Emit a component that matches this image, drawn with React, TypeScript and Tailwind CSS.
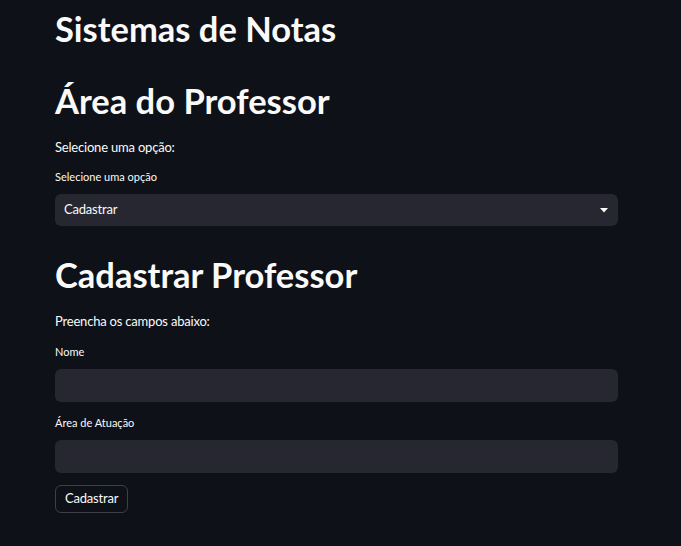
const font = { fontFamily: '"Lato", "Noto Sans", sans-serif' };

function Field({ label }: { label: string }) {
  return (
    <div className="flex flex-col">
      <label className="text-[11px] leading-[16px] text-[#fafafa] mb-[9px]">{label}</label>
      <input className="h-[33px] w-full rounded-md bg-[#262730] px-2 text-[13px] text-[#fafafa] outline-none" />
    </div>
  );
}

export default function App() {
  return (
    <div className="min-h-[546px] w-full bg-[#0e1117] text-[#fafafa]" style={font}>
      <div className="w-[563px] ml-[55px] flex flex-col pt-[9px]">
        <h1 className="text-[34.5px] leading-[40px] font-bold">Sistemas de Notas</h1>

        <h1 className="mt-[32px] text-[34.5px] leading-[40px] font-bold">Área do Professor</h1>
        <p className="mt-[16px] text-[13px] leading-[20px] tracking-[-0.2px]">Selecione uma opção:</p>

        <label className="mt-[12px] text-[11px] leading-[16px]">Selecione uma opção</label>
        <div className="mt-[9px] h-[32px] rounded-md bg-[#262730] flex items-center justify-between pl-[9px] pr-[10px]">
          <span className="text-[13px] tracking-[-0.2px]">Cadastrar</span>
          <svg width="8" height="5" viewBox="0 0 8 5" className="mt-[1px]">
            <path d="M0 0 H8 L4 4.5 Z" fill="#fafafa" />
          </svg>
        </div>

        <h1 className="mt-[29px] text-[34.5px] leading-[40px] font-bold">Cadastrar Professor</h1>
        <p className="mt-[16px] text-[13px] leading-[20px] tracking-[-0.2px]">Preencha os campos abaixo:</p>

        <div className="mt-[13px] flex flex-col gap-[13px]">
          <Field label="Nome" />
          <Field label="Área de Atuação" />
        </div>

        <div className="mt-[12px]">
          <button className="h-[28px] px-[9px] rounded-md border border-[#3d4049] text-[13px] tracking-[-0.2px] text-[#fafafa] bg-transparent">
            Cadastrar
          </button>
        </div>
      </div>
    </div>
  );
}
